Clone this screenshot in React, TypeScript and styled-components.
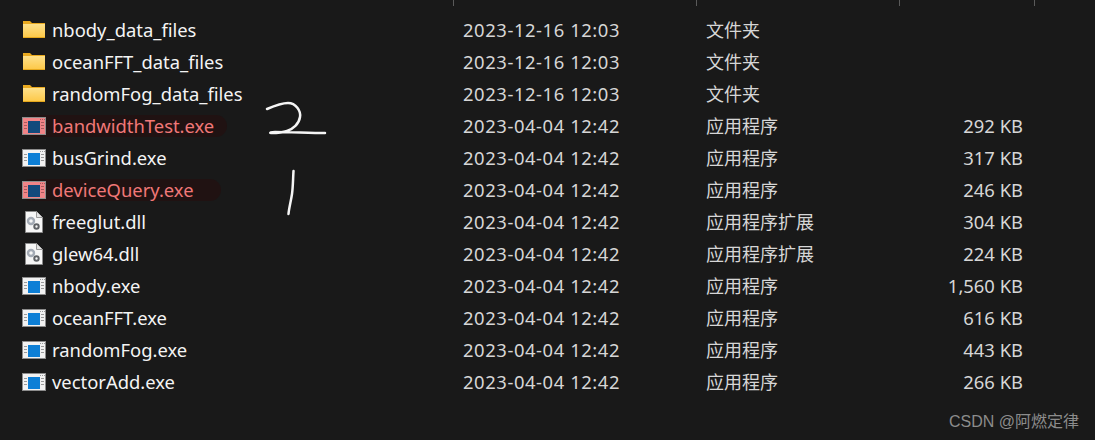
import styled, { createGlobalStyle } from 'styled-components';

// #region Styles

const GlobalStyle = createGlobalStyle`
  html, body {
    margin: 0;
    padding: 0;
    background-color: #191919;
  }
`;

const COLUMNS = '454px 243px 203px 135px';

const Page = styled.div`
  position: relative;
  width: 1095px;
  height: 440px;
  overflow: hidden;
  background-color: #191919;
  font-family: 'Noto Sans', 'Noto Sans CJK SC', sans-serif;
  font-size: 18.4px;
  color: #f4f4f4;
`;

const HeaderTicks = styled.div`
  display: grid;
  grid-template-columns: ${COLUMNS};
  height: 6px;
  margin-bottom: 8px;
`;

const Tick = styled.div`
  border-right: 1px solid #5a5a5a;
`;

const FileList = styled.div`
  display: flex;
  flex-direction: column;
`;

const Row = styled.div<{ $marked?: boolean }>`
  position: relative;
  display: grid;
  grid-template-columns: ${COLUMNS};
  align-items: center;
  height: 32px;
  color: ${({ $marked }) => ($marked ? '#f07878' : '#f4f4f4')};
`;

const NameCell = styled.div`
  position: relative;
  display: flex;
  align-items: center;
  gap: 6px;
  padding-left: 22px;
  white-space: nowrap;
`;

const NameText = styled.span`
  padding-bottom: 2px;
`;

const IconBox = styled.svg`
  flex: none;
  width: 24px;
  height: 24px;
`;

const DateCell = styled.div`
  padding-left: 9px;
  padding-bottom: 2px;
  font-size: 18.4px;
  letter-spacing: 0.58px;
  color: #d6d6d6;
  white-space: nowrap;
`;

const TypeCell = styled.div`
  padding-left: 9px;
  padding-bottom: 2px;
  font-size: 18px;
  color: #d6d6d6;
  white-space: nowrap;
`;

const SizeCell = styled.div`
  padding-right: 12px;
  padding-bottom: 2px;
  text-align: right;
  font-size: 18.4px;
  color: #d6d6d6;
  white-space: nowrap;
`;

const Pill = styled.div<{ $left: number; $width: number }>`
  position: absolute;
  top: 5px;
  left: ${({ $left }) => $left}px;
  width: ${({ $width }) => $width}px;
  height: 22px;
  border-radius: 11px;
  background-color: #201212;
`;

const Scribble = styled.svg<{ $left: number; $top: number }>`
  position: absolute;
  left: ${({ $left }) => $left}px;
  top: ${({ $top }) => $top}px;
`;

const Watermark = styled.div`
  position: absolute;
  right: 16px;
  bottom: 8px;
  font-family: 'Liberation Sans', 'Noto Sans CJK SC', sans-serif;
  font-size: 16px;
  color: #8c8c8c;
`;

// #endregion

type Kind = 'folder' | 'exe' | 'dll';

type FileEntry = {
  name: string;
  date: string;
  type: string;
  size?: string;
  kind: Kind;
  pill?: { left: number; width: number };
};

const FOLDER_DATE = '2023-12-16 12:03';
const FILE_DATE = '2023-04-04 12:42';

const files: FileEntry[] = [
  { name: 'nbody_data_files', date: FOLDER_DATE, type: '文件夹', kind: 'folder' },
  { name: 'oceanFFT_data_files', date: FOLDER_DATE, type: '文件夹', kind: 'folder' },
  { name: 'randomFog_data_files', date: FOLDER_DATE, type: '文件夹', kind: 'folder' },
  { name: 'bandwidthTest.exe', date: FILE_DATE, type: '应用程序', size: '292 KB', kind: 'exe', pill: { left: 24, width: 203 } },
  { name: 'busGrind.exe', date: FILE_DATE, type: '应用程序', size: '317 KB', kind: 'exe' },
  { name: 'deviceQuery.exe', date: FILE_DATE, type: '应用程序', size: '246 KB', kind: 'exe', pill: { left: 20, width: 201 } },
  { name: 'freeglut.dll', date: FILE_DATE, type: '应用程序扩展', size: '304 KB', kind: 'dll' },
  { name: 'glew64.dll', date: FILE_DATE, type: '应用程序扩展', size: '224 KB', kind: 'dll' },
  { name: 'nbody.exe', date: FILE_DATE, type: '应用程序', size: '1,560 KB', kind: 'exe' },
  { name: 'oceanFFT.exe', date: FILE_DATE, type: '应用程序', size: '616 KB', kind: 'exe' },
  { name: 'randomFog.exe', date: FILE_DATE, type: '应用程序', size: '443 KB', kind: 'exe' },
  { name: 'vectorAdd.exe', date: FILE_DATE, type: '应用程序', size: '266 KB', kind: 'exe' },
];

const FolderIcon = () => (
  <IconBox viewBox="0 0 24 24">
    <defs>
      <linearGradient id="folderFill" x1="0" y1="0" x2="0" y2="1">
        <stop offset="0" stopColor="#fde08a" />
        <stop offset="1" stopColor="#fdc94a" />
      </linearGradient>
    </defs>
    <path d="M1 3h7l2 2h13v15H1z" fill="#e9a91f" />
    <rect x="1" y="6" width="22" height="13" fill="url(#folderFill)" />
    <rect x="1" y="19" width="22" height="1" fill="#e5a71c" />
  </IconBox>
);

const ExeIcon = ({ marked }: { marked: boolean }) => {
  const body = marked ? '#f08487' : '#f2f2f2';
  const ink = marked ? '#a85a5c' : '#9a9a9a';
  return (
    <IconBox viewBox="0 0 24 24">
      <rect x="0.5" y="3.5" width="23" height="17" fill={body} stroke="#8c8c8c" />
      <rect x="6" y="7" width="12" height="12" fill={marked ? '#124a7c' : '#0d7fd6'} />
      <rect x="18" y="5" width="1" height="1" fill={ink} />
      <rect x="20" y="5" width="1" height="1" fill={ink} />
      <rect x="22" y="5" width="1" height="1" fill={ink} />
      <rect x="19" y="8" width="3" height="1" fill={ink} />
      <rect x="19" y="11" width="3" height="1" fill={ink} />
      <rect x="19" y="14" width="3" height="1" fill={ink} />
      <rect x="2" y="8" width="3" height="1" fill={ink} />
      <rect x="2" y="11" width="3" height="1" fill={ink} />
      <rect x="2" y="14" width="3" height="1" fill={ink} />
    </IconBox>
  );
};

const DllIcon = () => (
  <IconBox viewBox="0 0 24 24">
    <path d="M3.5 1.5h11l6 6v15h-17z" fill="#f6f6f6" stroke="#8a8a8a" />
    <path d="M14.5 1.5v6h6" fill="#e4e4e4" stroke="#9a9a9a" />
    <circle cx="9" cy="11" r="3" fill="none" stroke="#a4abb5" strokeWidth="2.4" />
    <circle cx="14.5" cy="16.5" r="2.2" fill="none" stroke="#5f6266" strokeWidth="2" />
  </IconBox>
);

const FileIcon = ({ entry }: { entry: FileEntry }) => {
  if (entry.kind === 'folder') return <FolderIcon />;
  if (entry.kind === 'dll') return <DllIcon />;
  return <ExeIcon marked={!!entry.pill} />;
};

const App = () => (
  <Page>
    <GlobalStyle />
    <HeaderTicks>
      <Tick />
      <Tick />
      <Tick />
      <Tick />
    </HeaderTicks>
    <FileList>
      {files.map((entry) => (
        <Row key={entry.name} $marked={!!entry.pill}>
          {entry.pill && <Pill $left={entry.pill.left} $width={entry.pill.width} />}
          <NameCell>
            <FileIcon entry={entry} />
            <NameText>{entry.name}</NameText>
          </NameCell>
          <DateCell>{entry.date}</DateCell>
          <TypeCell>{entry.type}</TypeCell>
          <SizeCell>{entry.size}</SizeCell>
        </Row>
      ))}
    </FileList>
    <Scribble $left={265} $top={100} width="65" height="40" viewBox="0 0 65 40">
      <path
        d="M2 9 C9 6 16 3 23 3 C31 3 36 11 35 17 C34 24 28 29 22 31 C17 33 11 33 6 33 C4 33 6 32 10 32 C24 32 46 33 60 33"
        fill="none"
        stroke="#f5f5f5"
        strokeWidth="2.5"
        strokeLinecap="round"
        strokeLinejoin="round"
      />
    </Scribble>
    <Scribble $left={280} $top={165} width="20" height="52" viewBox="0 0 20 52">
      <path
        d="M13.5 6 C13 14 13 22 12 29 C11 36 9 43 8.5 49"
        fill="none"
        stroke="#f5f5f5"
        strokeWidth="2.5"
        strokeLinecap="round"
      />
    </Scribble>
    <Watermark>CSDN @阿燃定律</Watermark>
  </Page>
);

export default App;
